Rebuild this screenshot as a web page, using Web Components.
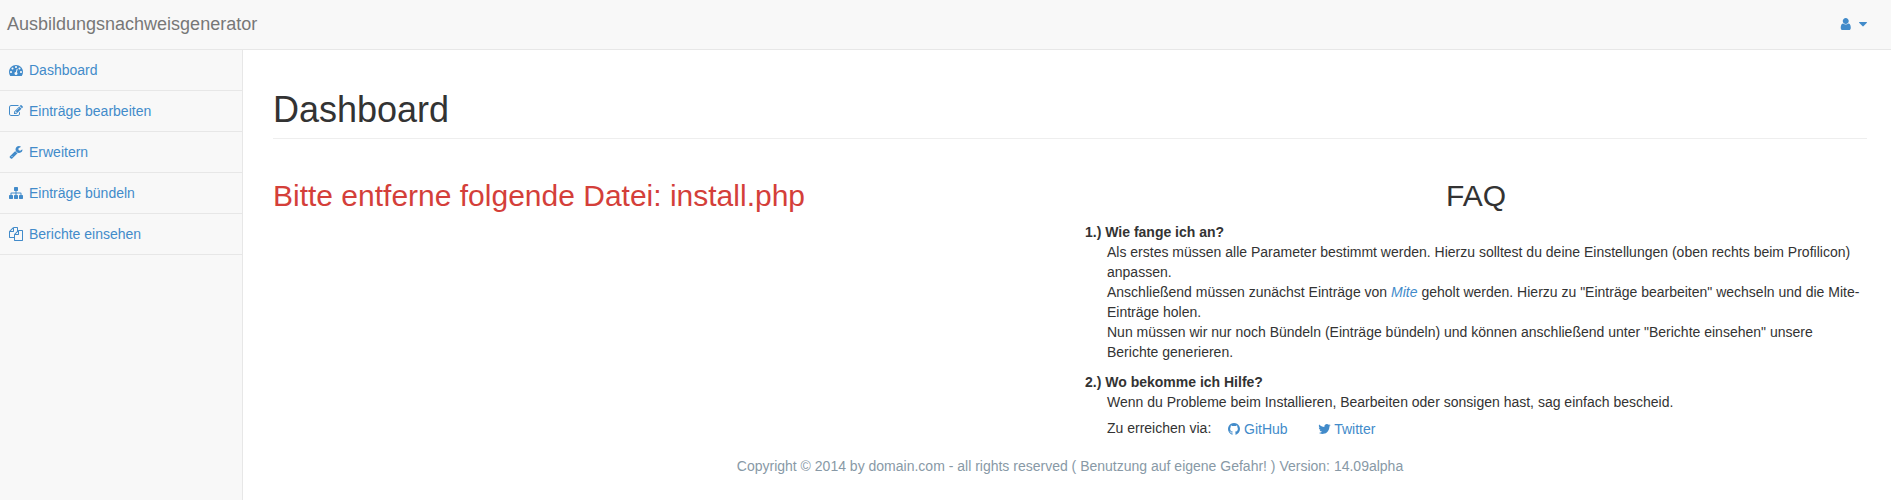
<!DOCTYPE html>
<html lang="de">
<head>
<meta charset="utf-8">
<title>Ausbildungsnachweisgenerator</title>
<style>
html,body{margin:0;height:100%;background:#fff}
body{font:14px/20px "Liberation Sans",Arial,sans-serif;color:#333;overflow:hidden}
</style>
</head>
<body>
<app-shell>
  <top-bar slot="header">Ausbildungsnachweisgenerator</top-bar>
  <side-item slot="nav" icon="dashboard">Dashboard</side-item>
  <side-item slot="nav" icon="edit">Einträge bearbeiten</side-item>
  <side-item slot="nav" icon="wrench">Erweitern</side-item>
  <side-item slot="nav" icon="sitemap">Einträge bündeln</side-item>
  <side-item slot="nav" icon="files">Berichte einsehen</side-item>
  <page-header>Dashboard</page-header>
  <dashboard-row>
    <section-title slot="main" tone="danger">Bitte entferne folgende Datei: install.php</section-title>
    <section-title slot="aside" align="center">FAQ</section-title>
    <faq-item slot="aside"><span slot="question">1.) Wie fange ich an?</span>Als erstes müssen alle Parameter bestimmt werden. Hierzu solltest du deine Einstellungen (oben rechts beim Profilicon) anpassen.<br>Anschließend müssen zunächst Einträge von <mite-link>Mite</mite-link> geholt werden. Hierzu zu "Einträge bearbeiten" wechseln und die Mite-Einträge holen.<br>Nun müssen wir nur noch Bündeln (Einträge bündeln) und können anschließend unter "Berichte einsehen" unsere Berichte generieren.</faq-item>
    <faq-item slot="aside"><span slot="question">2.) Wo bekomme ich Hilfe?</span>Wenn du Probleme beim Installieren, Bearbeiten oder sonsigen hast, sag einfach bescheid.<br>Zu erreichen via: <link-button icon="github" size="12">GitHub</link-button> <link-button icon="twitter" size="13">Twitter</link-button></faq-item>
  </dashboard-row>
  <page-footer>Copyright © 2014 by domain.com - all rights reserved ( Benutzung auf eigene Gefahr! ) Version: 14.09alpha</page-footer>
</app-shell>
<script>
// Icon outlines on a 1792-unit square; each viewBox trims to the glyph's advance width.
const ICONS={
dashboard:['0 0 1792 1792','M384 1152q0-53-37.5-90.5t-90.5-37.5-90.5 37.5-37.5 90.5 37.5 90.5 90.5 37.5 90.5-37.5 37.5-90.5zm192-448q0-53-37.5-90.5t-90.5-37.5-90.5 37.5-37.5 90.5 37.5 90.5 90.5 37.5 90.5-37.5 37.5-90.5zm428 481l101-382q6-26-7.5-48.5t-38.5-29.5-48 6.5-30 39.5l-101 382q-60 5-107 43.5t-63 98.5q-20 77 20 146t117 89 146-20 89-117q16-60-6-117t-72-91zm660-33q0-53-37.5-90.5t-90.5-37.5-90.5 37.5-37.5 90.5 37.5 90.5 90.5 37.5 90.5-37.5 37.5-90.5zm-640-640q0-53-37.5-90.5t-90.5-37.5-90.5 37.5-37.5 90.5 37.5 90.5 90.5 37.5 90.5-37.5 37.5-90.5zm448 192q0-53-37.5-90.5t-90.5-37.5-90.5 37.5-37.5 90.5 37.5 90.5 90.5 37.5 90.5-37.5 37.5-90.5zm320 448q0 261-141 483-19 29-54 29h-1402q-35 0-54-29-141-221-141-483 0-182 71-348t191-286 286-191 348-71 348 71 286 191 191 286 71 348z'],
edit:['0 0 1792 1792','M888 1184l116-116-152-152-116 116v56h96v96h56zm440-720q-16-16-33 1l-350 350q-17 17-1 33t33-1l350-350q17-17 1-33zm80 594v190q0 119-84.5 203.5t-203.5 84.5h-832q-119 0-203.5-84.5t-84.5-203.5v-832q0-119 84.5-203.5t203.5-84.5h832q63 0 117 25 15 7 18 23 3 17-9 29l-49 49q-14 14-32 8-23-6-45-6h-832q-66 0-113 47t-47 113v832q0 66 47 113t113 47h832q66 0 113-47t47-113v-126q0-13 9-22l64-64q15-15 35-7t20 29zm-96-738l288 288-672 672h-288v-288zm444 132l-92 92-288-288 92-92q28-28 68-28t68 28l152 152q28 28 28 68t-28 68z'],
wrench:['0 0 1792 1792','M448 1472q0-26-19-45t-45-19-45 19-19 45 19 45 45 19 45-19 19-45zm644-420l-682 682q-37 37-90 37-52 0-91-37l-106-108q-38-36-38-90 0-53 38-91l681-681q39 98 114.5 173.5t173.5 114.5zm634-435q0 39-23 106-47 134-164.5 217.5t-258.5 83.5q-185 0-316.5-131.5t-131.5-316.5 131.5-316.5 316.5-131.5q58 0 121.5 16.5t107.5 46.5q16 11 16 28t-16 28l-293 169v224l193 107q5-3 79-48.5t135.5-81 70.5-35.5q15 0 23.5 10t8.5 25z'],
sitemap:['0 0 1792 1792','M1792 1248v320q0 40-28 68t-68 28h-320q-40 0-68-28t-28-68v-320q0-40 28-68t68-28h96v-192h-512v192h96q40 0 68 28t28 68v320q0 40-28 68t-68 28h-320q-40 0-68-28t-28-68v-320q0-40 28-68t68-28h96v-192h-512v192h96q40 0 68 28t28 68v320q0 40-28 68t-68 28h-320q-40 0-68-28t-28-68v-320q0-40 28-68t68-28h96v-192q0-52 38-90t90-38h512v-192h-96q-40 0-68-28t-28-68v-320q0-40 28-68t68-28h320q40 0 68 28t28 68v320q0 40-28 68t-68 28h-96v192h512q52 0 90 38t38 90v192h96q40 0 68 28t28 68z'],
files:['0 0 1792 1792','M1696 384q40 0 68 28t28 68v1216q0 40-28 68t-68 28h-960q-40 0-68-28t-28-68v-288h-544q-40 0-68-28t-28-68v-672q0-40 20-88t48-76l408-408q28-28 76-48t88-20h416q40 0 68 28t28 68v328q68-40 128-40h416zm-544 213l-299 299h299v-299zm-640-384l-299 299h299v-299zm196 647l316-316v-416h-384v416q0 40-28 68t-68 28h-416v640h512v-256q0-40 20-88t48-76zm956 804v-1152h-384v416q0 40-28 68t-68 28h-416v640h896z'],
github:['128 0 1536 1792','M896 128q209 0 385.5 103t279.5 279.5 103 385.5q0 251-146.5 451.5t-378.5 277.5q-27 5-40-7t-13-30q0-3 .5-76.5t.5-134.5q0-97-52-142 57-6 102.5-18t94-39 81-66.5 53-105 20.5-150.5q0-119-79-206 37-91-8-204-28-9-81 11t-92 44l-38 24q-93-26-192-26t-192 26q-16-11-42.5-27t-83.5-38.5-85-13.5q-45 113-8 204-79 87-79 206 0 85 20.5 150t52.5 105 80.5 67 94 39 102.5 18q-39 36-49 103-21 10-45 15t-57 5-65.5-21.5-55.5-62.5q-19-32-48.5-52t-49.5-24l-20-3q-21 0-29 4.5t-5 11.5 9 14 13 12l7 5q22 10 43.5 38t31.5 51l10 23q13 38 44 61.5t67 30 69.5 7 55.5-3.5l23-4q0 38 .5 88.5t.5 54.5q0 18-13 30t-40 7q-232-77-378.5-277.5t-146.5-451.5q0-209 103-385.5t279.5-279.5 385.5-103z'],
twitter:['64 0 1664 1792','M1684 408q-67 98-162 167 1 14 1 42 0 130-38 259.5t-115.5 248.5-184.5 210.5-258 146-323 54.5q-271 0-496-145 35 4 78 4 225 0 401-138-105-2-188-64.5t-114-159.5q33 5 61 5 43 0 85-11-112-23-185.5-111.5t-73.5-205.5v-4q68 38 146 41-66-44-105-115t-39-154q0-88 44-163 121 149 294.5 238.5t371.5 99.5q-8-38-8-74 0-134 94.5-228.5t228.5-94.5q140 0 236 102 109-21 205-78-37 115-142 178 93-10 186-50z'],
user:['192 0 1408 1792','M1536 1399q0 109-62.5 187t-150.5 78h-854q-88 0-150.5-78t-62.5-187q0-85 8.5-160.5t31.5-152 58.5-131 94-89 134.5-34.5q131 128 313 128t313-128q76 0 134.5 34.5t94 89 58.5 131 31.5 152 8.5 160.5zm-256-887q0 159-112.5 271.5t-271.5 112.5-271.5-112.5-112.5-271.5 112.5-271.5 271.5-112.5 271.5 112.5 112.5 271.5z'],
caret:['384 0 1024 1792','M1408 704q0 26-19 45l-448 448q-19 19-45 19t-45-19l-448-448q-19-19-19-45t19-45 45-19h896q26 0 45 19t19 45z']
};
const define=(name,render)=>customElements.define(name,class extends HTMLElement{
  constructor(){super();this.attachShadow({mode:'open'});}
  connectedCallback(){this.shadowRoot.innerHTML=render(this);}
});
define('fa-icon',el=>{
  const [box,d]=ICONS[el.getAttribute('name')];
  return `<style>:host{display:inline-block;width:${el.getAttribute('width')||14}px;height:14px;color:#428bca}svg{display:block;width:100%;height:100%}</style><svg viewBox="${box}" fill="currentColor" aria-hidden="true"><path d="${d}"/></svg>`;
});
define('app-shell',()=>`<style>
:host{display:flex;flex-direction:column;height:100vh;background:#f8f8f8}
.body{display:flex;flex:1;min-height:0}
nav{width:242px;flex:none}
main{flex:1;background:#fff;border-left:1px solid #e7e7e7;padding:0 24px 0 30px}
</style><slot name="header"></slot><div class="body"><nav><slot name="nav"></slot></nav><main><slot></slot></main></div>`);
define('top-bar',()=>`<style>
:host{display:flex;justify-content:space-between;align-items:center;box-sizing:border-box;height:50px;flex:none;border-bottom:1px solid #e7e7e7;background:#f8f8f8;padding:0 24px 0 7px}
.brand{font-size:18px;line-height:20px;color:#777;margin-top:-2px}
.user{display:flex;gap:7.5px;margin-bottom:1px}
</style><span class="brand"><slot></slot></span><span class="user"><fa-icon name="user" width="11.5"></fa-icon><fa-icon name="caret" width="8"></fa-icon></span>`);
define('side-item',el=>`<style>
:host{display:flex;align-items:center;height:40px;border-bottom:1px solid #e7e7e7;padding-left:9px;gap:6px;color:#428bca}
</style><fa-icon name="${el.getAttribute('icon')}"></fa-icon><span><slot></slot></span>`);
define('page-header',()=>`<style>
:host{display:block;margin:40px 0 20px;padding-bottom:8px;border-bottom:1px solid #eee}
h1{font-size:36px;line-height:40px;font-weight:400;margin:0}
</style><h1><slot></slot></h1>`);
define('dashboard-row',()=>`<style>
:host{display:grid;grid-template-columns:1fr 782px;padding-top:20px}
</style><div><slot name="main"></slot></div><div><slot name="aside"></slot></div>`);
define('section-title',el=>`<style>
:host{display:block;margin-bottom:10px}
h2{font-size:30px;line-height:33px;font-weight:400;margin:0;text-align:${el.getAttribute('align')||'left'};color:${el.getAttribute('tone')==='danger'?'#d43f3a':'inherit'}}
</style><h2><slot></slot></h2>`);
define('faq-item',()=>`<style>
:host{display:block;margin-bottom:10px}
.q{font-weight:700}.a{padding-left:22px;padding-right:2px}
</style><div class="q"><slot name="question"></slot></div><div class="a"><slot></slot></div>`);
define('mite-link',()=>`<style>:host{color:#428bca;font-style:italic}</style><slot></slot>`);
define('link-button',el=>`<style>
:host{display:inline-block;vertical-align:middle;padding:6px 12px;border:1px solid transparent;color:#428bca;white-space:nowrap}
fa-icon{vertical-align:-2px}
</style><fa-icon name="${el.getAttribute('icon')}" width="${el.getAttribute('size')}"></fa-icon> <slot></slot>`);
define('page-footer',()=>`<style>:host{display:block;text-align:center;color:#8899a6}</style><slot></slot>`);
</script>
</body>
</html>
